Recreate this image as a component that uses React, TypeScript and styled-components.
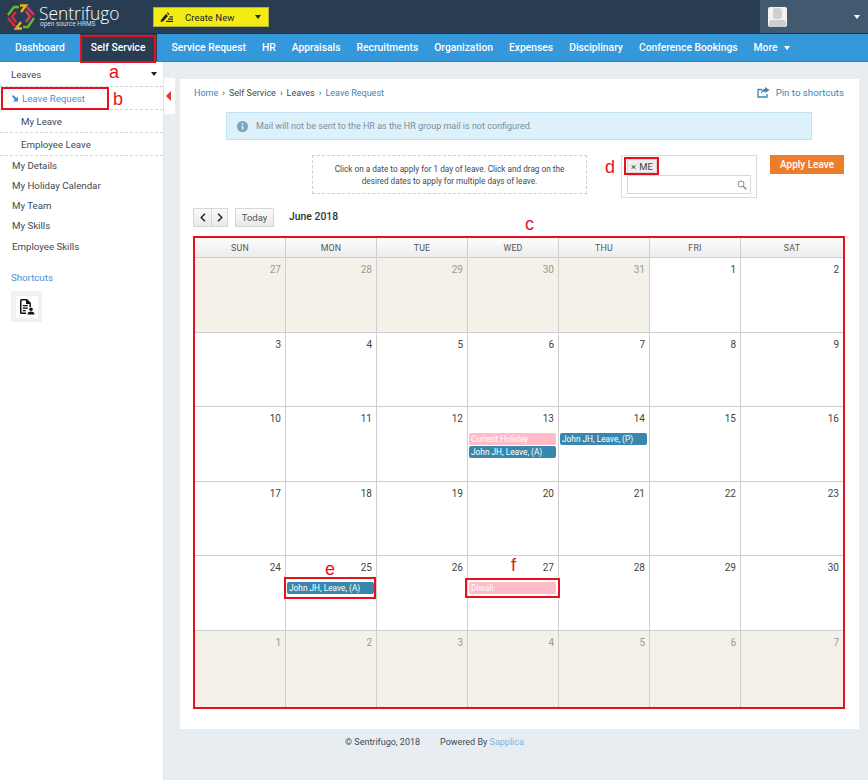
import React from "react";
import styled, { createGlobalStyle } from "styled-components";

const Global = createGlobalStyle`
  html, body { margin: 0; padding: 0; background: #e8edf2; }
  body { font-family: Roboto, "Liberation Sans", sans-serif; overflow: hidden; }
  * { box-sizing: border-box; }
`;

const Page = styled.div`
  width: 868px; height: 780px; display: flex; flex-direction: column; position: relative; overflow: hidden;
`;
const TopBar = styled.header`
  height: 34px; background: #283d52; display: flex; align-items: stretch; border-bottom: 1px solid #1f3040; flex: none;
`;
const Brand = styled.div`
  width: 153px; display: flex; align-items: center; padding-left: 7px; gap: 4px; flex: none;
`;
const BrandText = styled.div`
  color: #fff; display: flex; flex-direction: column; line-height: 1;
`;
const BrandName = styled.span`
  font-family: "Open Sans", sans-serif; font-size: 17.4px; font-weight: 300; line-height: 15px;
`;
const BrandSub = styled.span`
  font-size: 6.5px; line-height: 7px; color: #d5dde4; margin-left: 1px;
`;
const CreateButton = styled.button`
  width: 116px; height: 20px; margin-top: 7px; background: #f3ec14; border: 1px solid #b7b23a; padding: 0 7px 0 6px;
  display: flex; align-items: center; font: 9.6px Roboto, sans-serif; color: #222;
`;
const CreateLabel = styled.span`margin-left: 12px; margin-right: auto;`;
const Spacer = styled.div`flex: 1;`;
const UserBox = styled.div`
  width: 108px; background: #425a6f; display: flex; align-items: center; justify-content: space-between; padding: 0 8px 0 8px;
`;
const Avatar = styled.div`
  width: 19px; height: 20px; background: #f2f2f2; border-radius: 2px; position: relative; overflow: hidden;
  &::before { content: ""; position: absolute; left: 5px; top: 1px; width: 9px; height: 11px; background: #cfcfcf; border-radius: 3px; }
  &::after { content: ""; position: absolute; left: 1px; top: 13px; width: 17px; height: 7px; background: #cfcfcf; border-radius: 3px 3px 0 0; }
`;
const Caret = styled.span<{ $color?: string; $w?: number }>`
  display: inline-block; width: 0; height: 0;
  border-left: ${p => p.$w ?? 3}px solid transparent; border-right: ${p => p.$w ?? 3}px solid transparent;
  border-top: ${p => (p.$w ?? 3) + 1}px solid ${p => p.$color ?? "#fff"};
`;
const Nav = styled.nav`
  height: 28px; background: #3498db; display: flex; align-items: stretch; padding-left: 7px; flex: none; border-bottom: 1px solid #2d86c4;
`;
const NavItem = styled.div<{ $active?: boolean }>`
  flex: none; display: flex; align-items: center; gap: 7px;
  padding: 0 ${p => (p.$active ? 11 : 8)}px; margin: 0 ${p => (p.$active ? 7 : 0)}px;
  color: #fff; font-size: 10.3px; font-weight: 500; white-space: nowrap;
  background: ${p => (p.$active ? "#283d52" : "transparent")};
`;
const Body = styled.div`flex: 1; display: flex; min-height: 0;`;
const Sidebar = styled.aside`
  width: 164px; background: #fff; flex: none; border-right: 1px solid #e3e6e9; color: #3d4a57; font-size: 9.7px;
`;
const LeavesHead = styled.div`
  height: 25px; padding: 0 6px 0 11px; display: flex; align-items: center; justify-content: space-between;
  border-bottom: 1px dashed #cfd3d7;
`;
const SubRow = styled.div<{ $active?: boolean }>`
  height: 23px; padding-left: ${p => (p.$active ? 12 : 21)}px; display: flex; align-items: center; gap: 3px;
  border-bottom: 1px dashed #d4d8dc; color: ${p => (p.$active ? "#4a90d9" : "#3d4a57")};
`;
const MainLink = styled.div`
  height: 20.25px; padding-left: 12px; display: flex; align-items: center;
`;
const LinkList = styled.div`margin-top: -1px;`;
const ShortTitle = styled.div`
  color: #4a90d9; padding: 16px 0 0 11px; line-height: 12px;
`;
const ShortTile = styled.div`
  width: 31px; height: 31px; margin: 7px 0 0 11px; background: #eef1f5; display: flex; align-items: center; justify-content: center;
`;
const ShortInner = styled.div`
  width: 22px; height: 22px; background: #fff; display: flex; align-items: center; justify-content: center;
`;
const Toggle = styled.div`
  position: absolute; left: 164px; top: 77px; width: 12px; height: 38px; background: #fff; border: 1px solid #eceff2; border-left: 0;
  display: flex; align-items: center; justify-content: flex-start; padding-left: 2px;
  &::before { content: ""; border-right: 5px solid #e8342c; border-top: 5px solid transparent; border-bottom: 5px solid transparent; }
`;
const Main = styled.main`flex: 1; padding: 17px 10px 0 16px; display: flex; flex-direction: column;`;
const Card = styled.section`
  height: 650px; background: #fff; padding: 7px 14px 0 13px; flex: none;
`;
const CrumbRow = styled.div`
  display: flex; justify-content: space-between; align-items: center; height: 13px; font-size: 9px; color: #3d4a57;
`;
const Crumbs = styled.div`display: flex; gap: 4px; align-items: center; margin-left: 1px;`;
const Crumb = styled.span<{ $link?: boolean }>`color: ${p => (p.$link ? "#3a85b8" : "#3d4a57")};`;
const Pin = styled.div`display: flex; gap: 6px; align-items: center; color: #3a85b8; font-size: 9.7px; margin-right: 1px;`;
const Alert = styled.div`
  width: 586px; height: 28px; margin: 13px 0 0 33px; background: #dcf1fa; border: 1px solid #bfe3f2;
  display: flex; align-items: center; gap: 8px; padding-left: 10px; color: #7d8f9b; font-size: 9px;
`;
const Controls = styled.div`display: flex; align-items: flex-start; margin-top: 15px; height: 43px;`;
const Hint = styled.div`
  width: 275px; height: 39px; margin-left: 119px; border: 1px dashed #cfcfcf; text-align: center; font-size: 8.2px; line-height: 12.2px;
  color: #3d4a57; padding-top: 7px;
`;
const Picker = styled.div`
  width: 136px; height: 43px; margin-left: 34px; border: 1px solid #dcdcdc; padding: 3px 5px;
`;
const Chip = styled.div`
  width: 30px; height: 14px; background: #eee; border: 1px solid #d9d9d9; font-size: 9.5px; color: #444;
  display: flex; align-items: center; justify-content: center; gap: 3px;
`;
const SearchBox = styled.div`
  height: 19px; margin-top: 2px; border: 1px solid #d8d8d8; display: flex; align-items: center; justify-content: flex-end; padding-right: 3px;
`;
const Apply = styled.button`
  width: 74px; height: 19px; margin-left: 13px; background: #ed7d2b; border: 0; color: #fff; font: 500 10px Roboto, sans-serif; padding: 0;
`;
const CalTool = styled.div`display: flex; align-items: center; height: 19px; margin-top: 10px;`;
const NavBtn = styled.div<{ $w: number; $left?: boolean }>`
  width: ${p => p.$w}px; height: 19px; background: linear-gradient(#fbfbfb, #e9e9e9); border: 1px solid #d6d6d6;
  ${p => (p.$left ? "border-right: 0;" : "")}
  display: flex; align-items: center; justify-content: center; font-size: 9.5px; color: #555;
`;
const TodayBtn = styled(NavBtn)`margin-left: 7px;`;
const Month = styled.div`font-size: 10.4px; font-weight: 500; color: #333; margin: -2px 0 0 15px;`;
const CalWrap = styled.div`
  margin-top: 9px; width: 652px; height: 473px; border: 2px solid #e8101c; background: #ccc;
`;
const Grid = styled.div`
  display: grid; grid-template-columns: repeat(6, 91px) 1fr; grid-template-rows: 20px repeat(5, 74.5px) 1fr; height: 100%; background: #fff;
`;
const Head = styled.div<{ $last?: boolean }>`
  background: linear-gradient(#fdfdfd, #ececec); border-right: ${p => (p.$last ? "0" : "1px solid #cfcfcf")}; border-bottom: 1px solid #cfcfcf;
  display: flex; align-items: center; justify-content: center; font-size: 8.8px; color: #555; letter-spacing: 0.2px;
`;
const Cell = styled.div<{ $other?: boolean; $last?: boolean; $bottom?: boolean }>`
  background: ${p => (p.$other ? "#f4f1e8" : "#fff")};
  border-right: ${p => (p.$last ? "0" : "1px solid #cfcfcf")}; border-bottom: ${p => (p.$bottom ? "0" : "1px solid #cfcfcf")};
  padding: 5px 0 0 0; min-width: 0;
`;
const DayNum = styled.div<{ $other?: boolean }>`
  text-align: right; padding-right: 4px; font-size: 10px; line-height: 14px; color: ${p => (p.$other ? "#999" : "#444")};
`;
const Ev = styled.div<{ $kind: "leave" | "holiday"; $gap?: number }>`
  height: 12px; margin: ${p => p.$gap ?? 0}px 2px 1px 1px; border-radius: 2px; padding-left: 2px; font-size: 8.3px; line-height: 12px; font-weight: 400;
  white-space: nowrap; overflow: hidden; color: #fff;
  background: ${p => (p.$kind === "leave" ? "#3a87ad" : "#ffbcc8")};
`;
const Footer = styled.footer`
  display: flex; padding: 8px 0 0 165px; font-size: 9px; color: #3d4a57; gap: 20px;
`;
const FooterLink = styled.span`color: #74b9e0;`;
const Mark = styled.div<{ $l: number; $t: number; $w: number; $h: number }>`
  position: absolute; left: ${p => p.$l}px; top: ${p => p.$t}px; width: ${p => p.$w}px; height: ${p => p.$h}px; border: 2px solid #e8101c; pointer-events: none;
`;
const Tag = styled.span<{ $l: number; $t: number }>`
  position: absolute; left: ${p => p.$l}px; top: ${p => p.$t}px; color: #e8101c; font-size: 18px; line-height: 20px;
  font-family: "Liberation Sans", sans-serif;
`;

const Logo = () => (
  <svg width="28" height="26" viewBox="0 0 28 26" fill="none" strokeWidth="2.4" strokeLinejoin="miter">
    <path d="M1 11 L7 3 H12" stroke="#6ab52c" />
    <path d="M13 1.5 H19 L14 8" stroke="#eab01e" />
    <path d="M20 3 L27 11" stroke="#d8356f" />
    <path d="M19 7 L23 12.5 L19 18" stroke="#e0404a" />
    <path d="M27 14 L21 23 H16" stroke="#6ab52c" />
    <path d="M15 24.5 H9 L14 18" stroke="#eab01e" />
    <path d="M1 14 L8 22.5" stroke="#e0283c" />
    <path d="M9 8 L5 12.5 L9 18" stroke="#e0283c" />
  </svg>
);
const PencilIcon = () => (
  <svg width="13" height="11" viewBox="0 0 13 11" fill="#222">
    <path d="M1 8 L6 2 L8 4 L3 9.5 L0.5 10 Z" />
    <path d="M6.8 1.2 L7.8 0.3 L9.5 2 L8.6 3 Z" />
    <rect x="6" y="8.8" width="7" height="1.2" />
    <rect x="8" y="6.5" width="5" height="1.2" />
    <rect x="9.5" y="4.3" width="3.5" height="1.2" />
  </svg>
);
const PinIcon = () => (
  <svg width="13" height="11" viewBox="0 0 13 11" fill="none" stroke="#3a85b8">
    <path d="M5 2.5 H1 V10 H10 V7" strokeWidth="1.3" />
    <path d="M8 0 L12.5 3 L8 6 V4.4 C6 4.4 5 5.3 4 7 C4 4 5.6 2 8 1.7 Z" fill="#3a85b8" stroke="none" />
  </svg>
);
const InfoIcon = () => (
  <svg width="11" height="11" viewBox="0 0 11 11">
    <circle cx="5.5" cy="5.5" r="5.5" fill="#7ba5ba" />
    <rect x="4.7" y="4.6" width="1.6" height="4" fill="#dcf1fa" />
    <rect x="4.7" y="2.3" width="1.6" height="1.5" fill="#dcf1fa" />
  </svg>
);
const SearchIcon = () => (
  <svg width="10" height="10" viewBox="0 0 10 10" fill="none" stroke="#888" strokeWidth="1">
    <circle cx="4" cy="4" r="3" />
    <path d="M6.2 6.2 L9.3 9.3" strokeWidth="1.4" />
  </svg>
);
const ArrowIcon = () => (
  <svg width="7" height="7" viewBox="0 0 7 7" fill="#3f8fd8">
    <path d="M0 1.2 L1.2 0 L4.5 3 L6 1.5 V6.5 H1 L2.7 4.8 Z" />
  </svg>
);
const DocIcon = () => (
  <svg width="16" height="16" viewBox="0 0 16 16" fill="#111">
    <path d="M1 1.5 A1.5 1.5 0 0 1 2.5 0 H8 L12 4 V8 H10.5 V5 H7 V1.5 H2.5 V13.5 H7 V15 H2.5 A1.5 1.5 0 0 1 1 13.5 Z" />
    <rect x="3.8" y="6" width="5" height="1.3" />
    <rect x="3.8" y="8.5" width="5" height="1.3" />
    <rect x="3.8" y="11" width="3" height="1.3" />
    <circle cx="12" cy="10.3" r="1.8" />
    <path d="M8.5 15.5 C8.5 13.3 10 12.6 12 12.6 C14 12.6 15.5 13.3 15.5 15.5 Z" />
  </svg>
);
const Chevron = ({ dir }: { dir: "l" | "r" }) => (
  <svg width="6" height="9" viewBox="0 0 6 9" fill="none" stroke="#222" strokeWidth="1.4">
    <path d={dir === "l" ? "M5 0.8 L1.2 4.5 L5 8.2" : "M1 0.8 L4.8 4.5 L1 8.2"} />
  </svg>
);

const navItems: [string, boolean?][] = [
  ["Dashboard"], ["Self Service", true], ["Service Request"], ["HR"], ["Appraisals"],
  ["Recruitments"], ["Organization"], ["Expenses"], ["Disciplinary"], ["Conference Bookings"],
];
const headers = ["SUN", "MON", "TUE", "WED", "THU", "FRI", "SAT"];
type EvT = { text: string; kind: "leave" | "holiday" };
const leaveA: EvT = { text: "John JH, Leave, (A)", kind: "leave" };
const events: Record<string, EvT[]> = {
  "13": [{ text: "Current Holiday", kind: "holiday" }, leaveA],
  "14": [{ text: "John JH, Leave, (P)", kind: "leave" }],
  "25": [leaveA],
  "27": [{ text: "Diwali", kind: "holiday" }],
};
const days: { n: number; other: boolean }[] = [
  ...[27, 28, 29, 30, 31].map(n => ({ n, other: true })),
  ...Array.from({ length: 30 }, (_, i) => ({ n: i + 1, other: false })),
  ...[1, 2, 3, 4, 5, 6, 7].map(n => ({ n, other: true })),
];

export default function App() {
  return (
    <Page>
      <Global />
      <TopBar>
        <Brand>
          <Logo />
          <BrandText>
            <BrandName>Sentrifugo</BrandName>
            <BrandSub>open source HRMS</BrandSub>
          </BrandText>
        </Brand>
        <CreateButton>
          <PencilIcon />
          <CreateLabel>Create New</CreateLabel>
          <Caret $color="#222" />
        </CreateButton>
        <Spacer />
        <UserBox>
          <Avatar />
          <Caret />
        </UserBox>
      </TopBar>
      <Nav>
        {navItems.map(([t, a]) => (
          <NavItem key={t} $active={a}>{t}</NavItem>
        ))}
        <NavItem>More <Caret /></NavItem>
      </Nav>
      <Body>
        <Sidebar>
          <LeavesHead>Leaves <Caret $color="#222" /></LeavesHead>
          <SubRow $active><ArrowIcon />Leave Request</SubRow>
          <SubRow>My Leave</SubRow>
          <SubRow>Employee Leave</SubRow>
          <LinkList>
            <MainLink>My Details</MainLink>
            <MainLink>My Holiday Calendar</MainLink>
            <MainLink>My Team</MainLink>
            <MainLink>My Skills</MainLink>
            <MainLink>Employee Skills</MainLink>
          </LinkList>
          <ShortTitle>Shortcuts</ShortTitle>
          <ShortTile><ShortInner><DocIcon /></ShortInner></ShortTile>
        </Sidebar>
        <Main>
          <Card>
            <CrumbRow>
              <Crumbs>
                <Crumb $link>Home</Crumb><Crumb>›</Crumb>
                <Crumb>Self Service</Crumb><Crumb>›</Crumb>
                <Crumb>Leaves</Crumb><Crumb>›</Crumb>
                <Crumb $link>Leave Request</Crumb>
              </Crumbs>
              <Pin><PinIcon />Pin to shortcuts</Pin>
            </CrumbRow>
            <Alert><InfoIcon />Mail will not be sent to the HR as the HR group mail is not configured.</Alert>
            <Controls>
              <Hint>Click on a date to apply for 1 day of leave. Click and drag on the<br />desired dates to apply for multiple days of leave.</Hint>
              <Picker>
                <Chip><span>×</span>ME</Chip>
                <SearchBox><SearchIcon /></SearchBox>
              </Picker>
              <Apply>Apply Leave</Apply>
            </Controls>
            <CalTool>
              <NavBtn $w={18} $left><Chevron dir="l" /></NavBtn>
              <NavBtn $w={17}><Chevron dir="r" /></NavBtn>
              <TodayBtn $w={39}>Today</TodayBtn>
              <Month>June 2018</Month>
            </CalTool>
            <CalWrap>
              <Grid>
                {headers.map((h, i) => <Head key={h} $last={i === 6}>{h}</Head>)}
                {days.map((d, i) => {
                  const list = !d.other ? events[String(d.n)] : undefined;
                  return (
                    <Cell key={i} $other={d.other} $last={i % 7 === 6} $bottom={i >= 35}>
                      <DayNum $other={d.other}>{d.n}</DayNum>
                      {list?.map((e, j) => (
                        <Ev key={j} $kind={e.kind} $gap={j === 0 ? 7 : 0}>{e.text}</Ev>
                      ))}
                    </Cell>
                  );
                })}
              </Grid>
            </CalWrap>
          </Card>
          <Footer>
            <span>© Sentrifugo, 2018</span>
            <span>Powered By <FooterLink>Sapplica</FooterLink></span>
          </Footer>
        </Main>
      </Body>
      <Toggle />
      <Mark $l={80} $t={35} $w={76} $h={28} />
      <Mark $l={1} $t={87} $w={108} $h={23} />
      <Mark $l={624} $t={157} $w={35} $h={18} />
      <Mark $l={284} $t={577} $w={92} $h={22} />
      <Mark $l={465} $t={578} $w={95} $h={20} />
      <Tag $l={109} $t={62}>a</Tag>
      <Tag $l={113} $t={89}>b</Tag>
      <Tag $l={525} $t={214}>c</Tag>
      <Tag $l={605} $t={157}>d</Tag>
      <Tag $l={325} $t={559}>e</Tag>
      <Tag $l={511} $t={555}>f</Tag>
    </Page>
  );
}
